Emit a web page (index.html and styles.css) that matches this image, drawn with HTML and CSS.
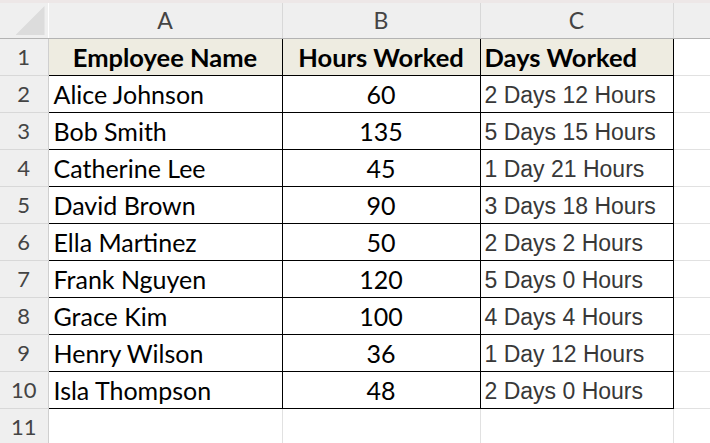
FILE: index.html
```html
<!DOCTYPE html>
<html>
<head>
<meta charset="utf-8">
<link rel="stylesheet" href="styles.css">
</head>
<body>
<div class="strip"></div>
<table class="sheet">
  <colgroup>
    <col class="c-rh"><col class="c-a"><col class="c-b"><col class="c-c"><col class="c-d">
  </colgroup>
  <tr class="colhead">
    <td class="corner"><span class="tri"></span></td>
    <td>A</td><td>B</td><td>C</td><td class="hd-last"></td>
  </tr>
  <tr class="r head">
    <td class="rh">1</td>
    <td class="t name bold center">Employee Name</td>
    <td class="t bold center">Hours Worked</td>
    <td class="t bold left">Days Worked</td>
    <td class="g"></td>
  </tr>
  <tr class="r"><td class="rh">2</td><td class="t name">Alice Johnson</td><td class="t center">60</td><td class="t days">2 Days 12 Hours</td><td class="g"></td></tr>
  <tr class="r"><td class="rh">3</td><td class="t name">Bob Smith</td><td class="t center">135</td><td class="t days">5 Days 15 Hours</td><td class="g"></td></tr>
  <tr class="r"><td class="rh">4</td><td class="t name">Catherine Lee</td><td class="t center">45</td><td class="t days">1 Day 21 Hours</td><td class="g"></td></tr>
  <tr class="r"><td class="rh">5</td><td class="t name">David Brown</td><td class="t center">90</td><td class="t days">3 Days 18 Hours</td><td class="g"></td></tr>
  <tr class="r"><td class="rh">6</td><td class="t name">Ella Martinez</td><td class="t center">50</td><td class="t days">2 Days 2 Hours</td><td class="g"></td></tr>
  <tr class="r"><td class="rh">7</td><td class="t name">Frank Nguyen</td><td class="t center">120</td><td class="t days">5 Days 0 Hours</td><td class="g"></td></tr>
  <tr class="r"><td class="rh">8</td><td class="t name">Grace Kim</td><td class="t center">100</td><td class="t days">4 Days 4 Hours</td><td class="g"></td></tr>
  <tr class="r"><td class="rh">9</td><td class="t name">Henry Wilson</td><td class="t center">36</td><td class="t days">1 Day 12 Hours</td><td class="g"></td></tr>
  <tr class="r"><td class="rh">10</td><td class="t name">Isla Thompson</td><td class="t center">48</td><td class="t days">2 Days 0 Hours</td><td class="g"></td></tr>
  <tr class="r empty"><td class="rh">11</td><td class="g"></td><td class="g"></td><td class="g"></td><td class="g"></td></tr>
</table>
</body>
</html>
```

FILE: styles.css
```css
html, body {
  margin: 0;
  padding: 0;
  background: #ffffff;
  overflow: hidden;
}

.strip {
  height: 3px;
  background: #ede7e7;
}

.sheet {
  border-collapse: collapse;
  table-layout: fixed;
  width: 710px;
  font-family: Lato, "Open Sans", sans-serif;
}

.c-rh { width: 48px; }
.c-a { width: 234px; }
.c-b { width: 198px; }
.c-c { width: 193px; }
.c-d { width: 37px; }

.sheet td {
  padding: 0;
  overflow: hidden;
  white-space: nowrap;
}

.colhead td {
  height: 35px;
  background: #efefef;
  color: #444444;
  font-size: 23px;
  text-align: center;
  vertical-align: middle;
  border-left: 1px solid #d8d8d8;
  border-bottom: 1px solid #b3b3b3;
  line-height: 35px;
}

.colhead .corner {
  position: relative;
  border-left: none;
  border-right: 1px solid #ffffff;
}

.tri {
  position: absolute;
  right: 3px;
  bottom: 3px;
  width: 29px;
  height: 29px;
  background: #dcdcdc;
  clip-path: polygon(100% 0, 100% 100%, 0 100%);
}

.r td {
  height: 36px;
  line-height: 36px;
}

.r .rh {
  background: #efefef;
  color: #444444;
  font-size: 22px;
  text-align: center;
  vertical-align: bottom;
  border-bottom: 1px solid #d8d8d8;
  border-right: 1px solid #cfcfcf;
}

.r .t {
  border: 1px solid #000000;
  font-size: 25px;
  color: #000000;
  padding: 0 5px;
  vertical-align: bottom;
}

.r .g {
  border-right: 1px solid #e1e1e1;
  border-bottom: 1px solid #e1e1e1;
}

.head .t {
  background: #eeece1;
}

.r .bold {
  font-weight: 700;
  font-size: 25.5px;
}
.center { text-align: center; }
.left { text-align: left; }

.r .days,
.head .left {
  padding-left: 4px;
}

.r .days {
  font-family: "Liberation Sans", Arial, sans-serif;
  font-size: 23px;
  line-height: 33px;
  color: #383838;
}
```
